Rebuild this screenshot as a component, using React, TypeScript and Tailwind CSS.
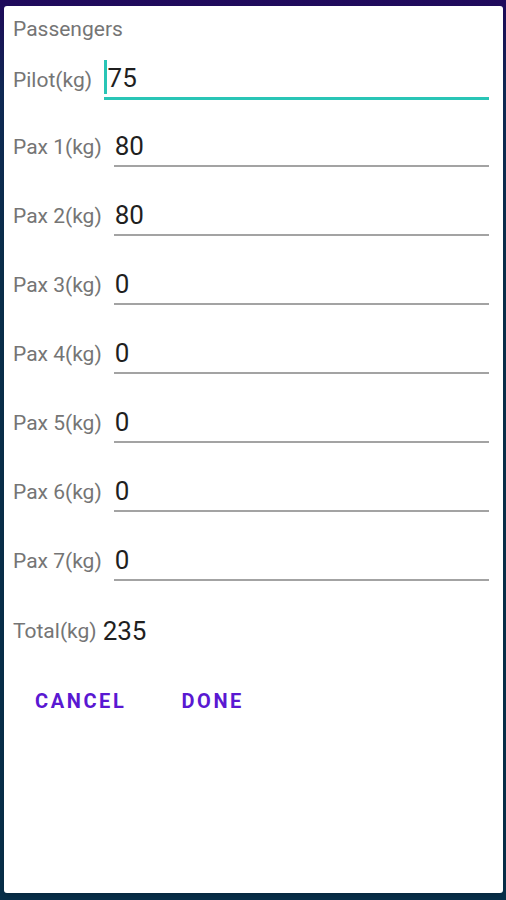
import React from "react";

type Row = { label: string; value: string };

const pax: Row[] = [
  { label: "Pax 1(kg)", value: "80" },
  { label: "Pax 2(kg)", value: "80" },
  { label: "Pax 3(kg)", value: "0" },
  { label: "Pax 4(kg)", value: "0" },
  { label: "Pax 5(kg)", value: "0" },
  { label: "Pax 6(kg)", value: "0" },
  { label: "Pax 7(kg)", value: "0" },
];

function PaxRow({ label, value }: Row) {
  return (
    <div className="flex items-center">
      <span className="text-[21px] leading-[25px] text-[#757575]">{label}</span>
      <div className="ml-[12px] flex h-[40px] flex-1 items-center border-b-2 border-[#a3a3a3] pl-[1px]">
        <span className="text-[26px] leading-[30px] text-[#1f1f1f]">{value}</span>
      </div>
    </div>
  );
}

export default function App() {
  return (
    <div
      className="flex h-[900px] w-[506px] flex-col pt-[6px] pl-[4px] pr-[3px] bg-[linear-gradient(180deg,#200a5c_0%,#102a55_10%,#0b2f4b_30%,#082f49_100%)]"
      style={{ fontFamily: "Roboto, 'Liberation Sans', sans-serif" }}
    >
      <div className="flex h-[887px] flex-col rounded-[3px] bg-white pl-[9px] pr-[14px] pt-[11px] shadow-md">
        <div className="text-[21px] leading-[25px] text-[#757575]">Passengers</div>

        {/* Pilot - focused field */}
        <div className="mt-[18px] flex items-center">
          <span className="text-[21px] leading-[25px] text-[#757575]">Pilot(kg)</span>
          <div className="ml-[12px] flex h-[40px] flex-1 items-start border-b-[3px] border-[#29c5b6]">
            <span className="h-[34px] w-[2.5px] bg-[#29c5b6]" />
            <span className="ml-[1px] mt-[3px] text-[26px] leading-[30px] text-[#1f1f1f]">75</span>
          </div>
        </div>

        <div className="mt-[27px] flex flex-col gap-[29px]">
          {pax.map((r) => (
            <PaxRow key={r.label} label={r.label} value={r.value} />
          ))}
        </div>

        <div className="mt-[35px] flex items-center">
          <span className="text-[21px] leading-[25px] text-[#757575]">Total(kg)</span>
          <span className="ml-[6px] text-[26px] leading-[30px] text-[#1f1f1f]">235</span>
        </div>

        <div className="ml-[22px] mt-[44px] flex gap-[55px]">
          <button className="text-[20px] font-bold leading-[22px] tracking-[2.6px] text-[#5a18d2]">CANCEL</button>
          <button className="text-[20px] font-bold leading-[22px] tracking-[2.6px] text-[#5a18d2]">DONE</button>
        </div>
      </div>
    </div>
  );
}
